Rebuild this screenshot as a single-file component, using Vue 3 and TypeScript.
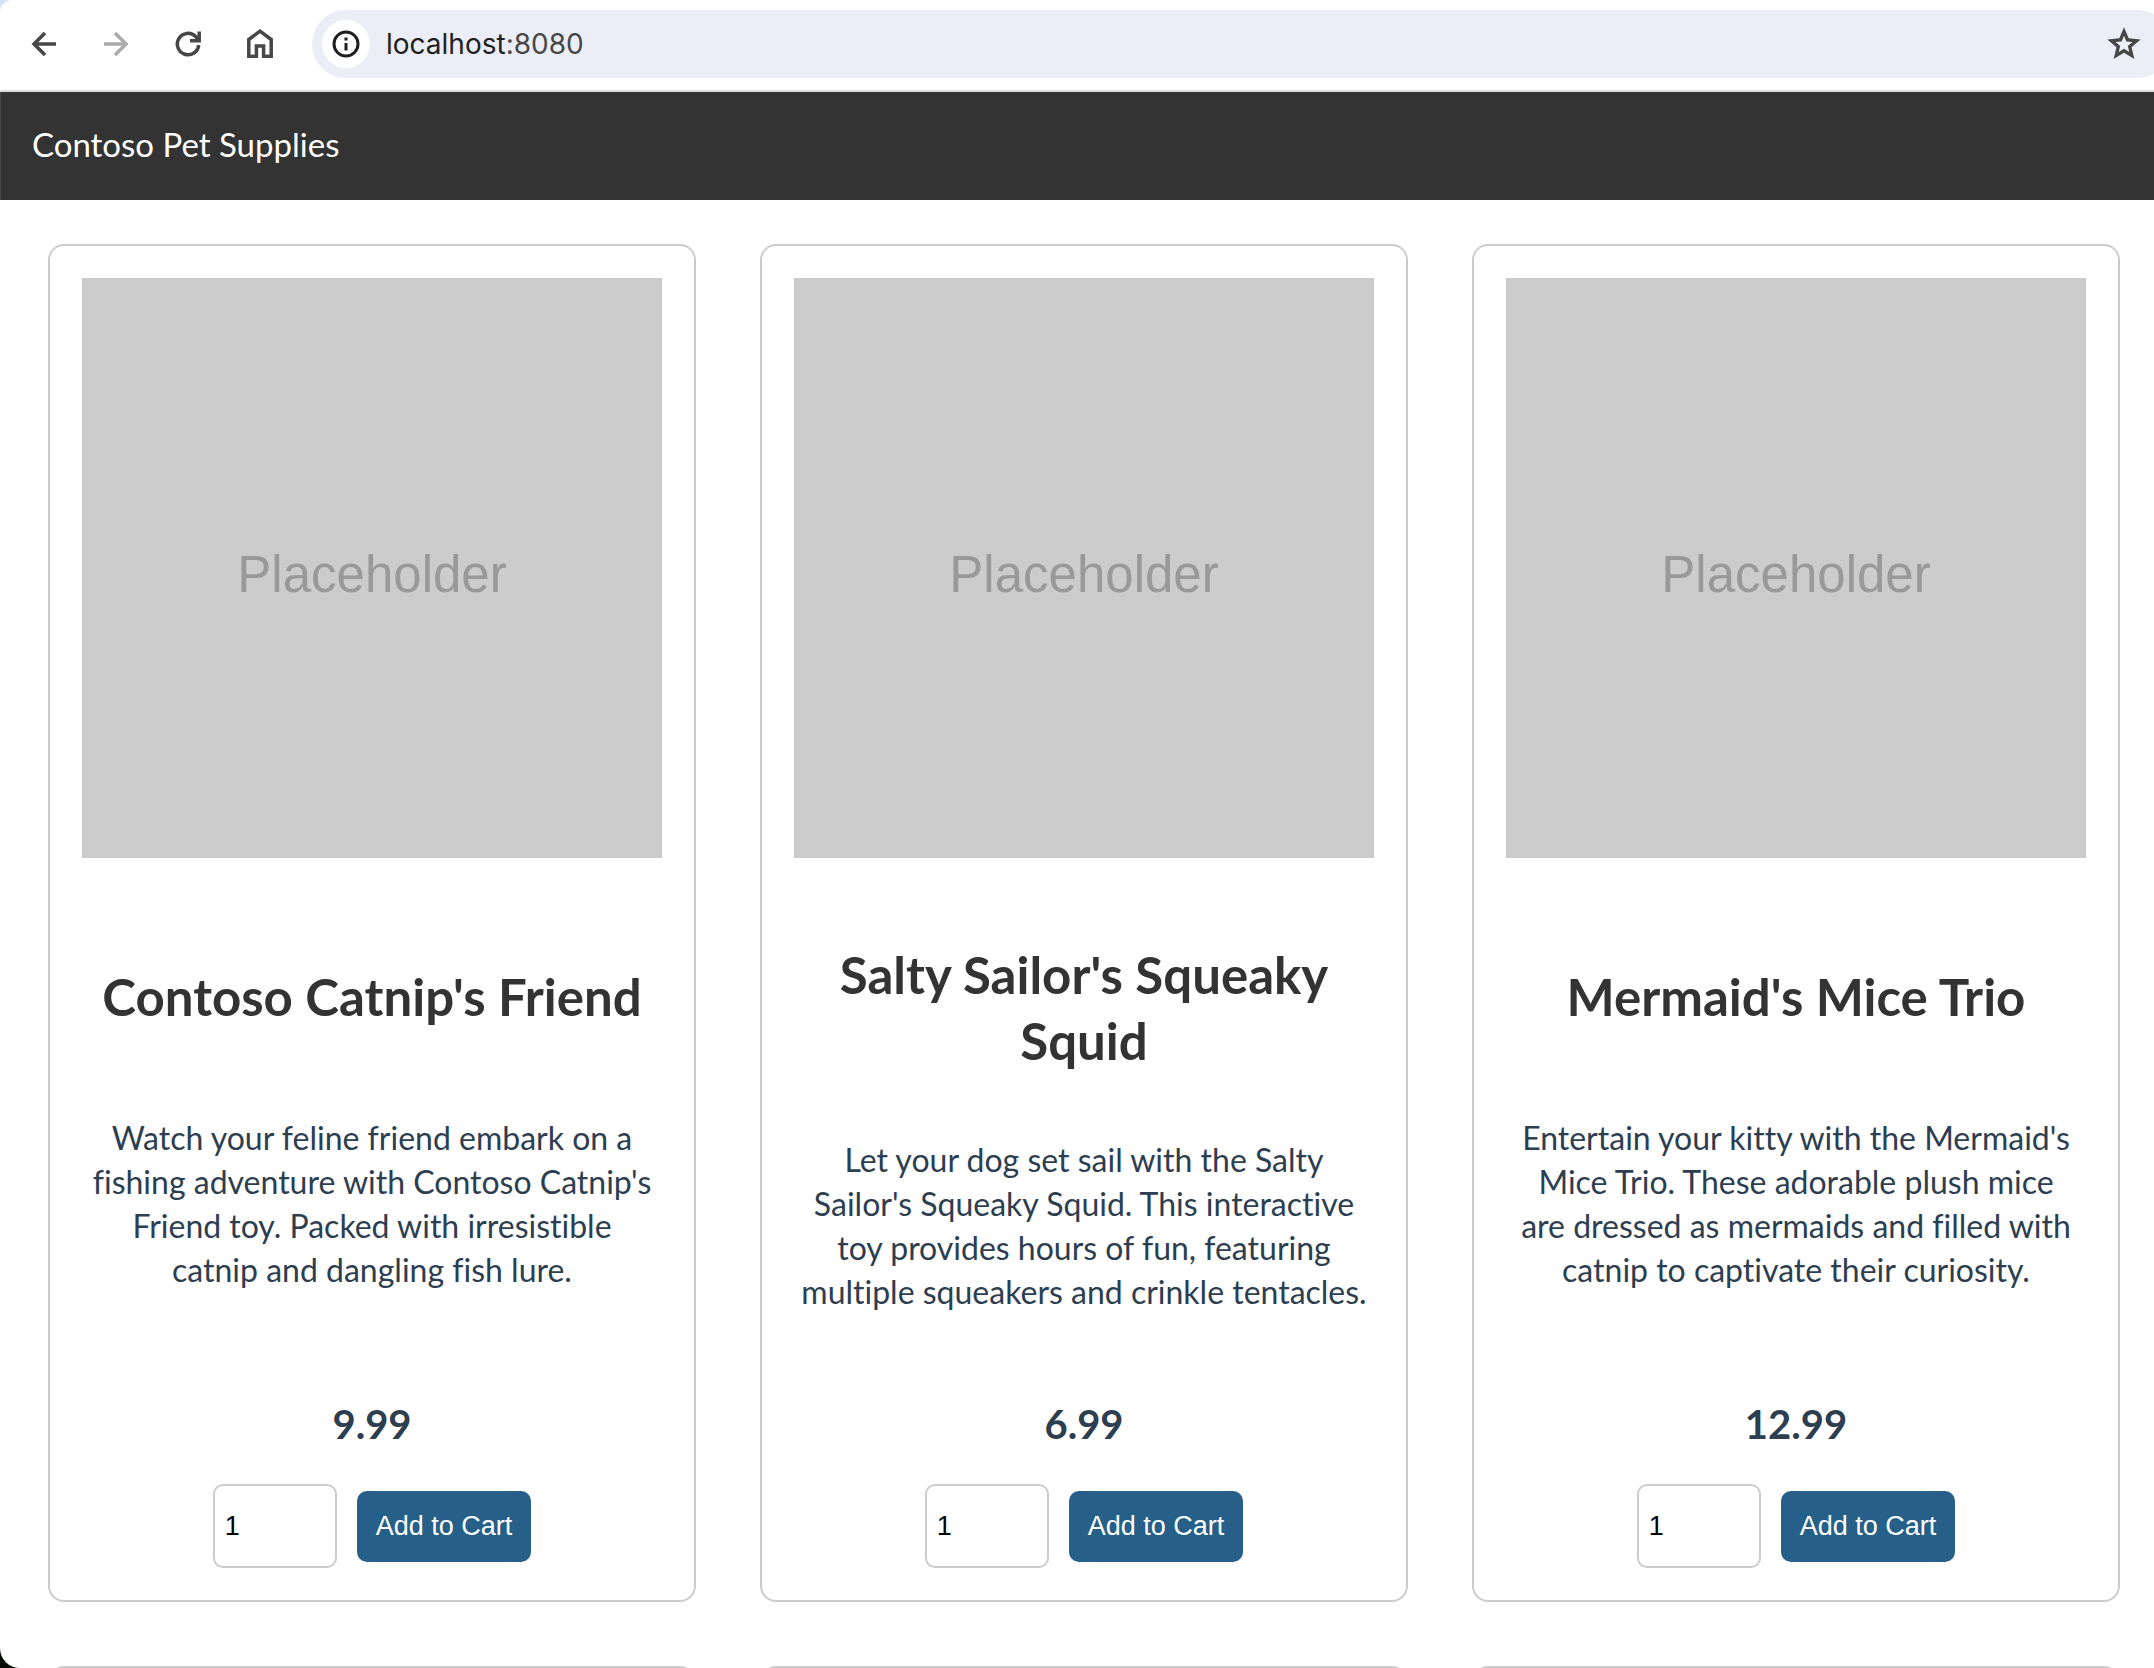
<script setup lang="ts">
import { ref } from 'vue'

interface Product {
  id: number
  name: string
  description: string[]
  price: string
  quantity: number
}

const url = { host: 'localhost', port: ':8080' }

const products = ref<Product[]>([
  {
    id: 1,
    name: "Contoso Catnip's Friend",
    description: [
      'Watch your feline friend embark on a',
      "fishing adventure with Contoso Catnip's",
      'Friend toy. Packed with irresistible',
      'catnip and dangling fish lure.',
    ],
    price: '9.99',
    quantity: 1,
  },
  {
    id: 2,
    name: "Salty Sailor's Squeaky Squid",
    description: [
      'Let your dog set sail with the Salty',
      "Sailor's Squeaky Squid. This interactive",
      'toy provides hours of fun, featuring',
      'multiple squeakers and crinkle tentacles.',
    ],
    price: '6.99',
    quantity: 1,
  },
  {
    id: 3,
    name: "Mermaid's Mice Trio",
    description: [
      "Entertain your kitty with the Mermaid's",
      'Mice Trio. These adorable plush mice',
      'are dressed as mermaids and filled with',
      'catnip to captivate their curiosity.',
    ],
    price: '12.99',
    quantity: 1,
  },
])
</script>

<template>
  <div class="desktop">
    <div class="window">
      <div class="toolbar">
        <button class="tool" type="button" aria-label="Back">
          <svg viewBox="0 0 32 32"><path d="M28 16H6.500M17 5L6 16l11 11" /></svg>
        </button>
        <button class="tool off" type="button" aria-label="Forward" disabled>
          <svg viewBox="0 0 32 32"><path d="M4 16h21.500M15 5l11 11-11 11" /></svg>
        </button>
        <button class="tool" type="button" aria-label="Reload">
          <svg viewBox="0 0 32 32">
            <path d="M26.700 17A10.700 10.700 0 1 1 23.600 8.500L26.500 11.400M27.200 3.500v9.200H18" />
          </svg>
        </button>
        <button class="tool" type="button" aria-label="Home">
          <svg viewBox="0 0 32 32"><path d="M4.800 11.500L16 3.200l11.200 8.300V28.300H19.600V18.100h-7.200V28.300H4.800z" /></svg>
        </button>
        <div class="address">
          <button class="info" type="button" aria-label="Site information">
            <svg viewBox="0 0 32 32">
              <circle cx="16" cy="16" r="12" />
              <path d="M16 15v7.500M16 9.500v3" />
            </svg>
          </button>
          <span class="url">{{ url.host }}<span class="port">{{ url.port }}</span></span>
          <button class="tool star" type="button" aria-label="Bookmark this page">
            <svg viewBox="0 0 24 24">
              <path
                fill-rule="evenodd"
                d="M12 2L14.810 8.620 22 9.240 16.550 13.970 18.180 21 12 17.270 5.820 21 7.450 13.970 2 9.240 9.190 8.620zM12 7.100L10.600 10.500 6.900 10.800 9.700 13.200 8.850 16.800 12 14.900 15.150 16.800 14.300 13.200 17.100 10.800 13.400 10.500z"
              />
            </svg>
          </button>
        </div>
      </div>

      <header class="banner">Contoso Pet Supplies</header>

      <main class="grid">
        <article v-for="product in products" :key="product.id" class="card">
          <div class="picture">Placeholder</div>
          <h2 class="name">{{ product.name }}</h2>
          <p class="description">{{ product.description.join('\n') }}</p>
          <div class="purchase">
            <h3 class="price">{{ product.price }}</h3>
            <div class="controls">
              <input v-model.number="product.quantity" class="quantity" type="number" min="1" :aria-label="`Quantity of ${product.name}`" />
              <button class="add" type="button">Add to Cart</button>
            </div>
          </div>
        </article>
        <article v-for="slot in 3" :key="`next-${slot}`" class="card"></article>
      </main>
    </div>
  </div>
</template>

<style>
body {
  margin: 0;
  overflow: hidden;
}
</style>

<style scoped>
.desktop {
  height: 100vh;
  overflow: hidden;
  background: linear-gradient(#d3e3fd 50%, #060d04 50%);
}

.window {
  display: flex;
  flex-direction: column;
  height: 100%;
  overflow: hidden;
  border-radius: 12px 0 0 20px;
  background: #fff;
  color: #2c3e50;
  font-family: Lato, 'Noto Sans', sans-serif;
  font-size: 32px;
  font-variant-ligatures: none;
  line-height: 44px;
}

.toolbar {
  display: flex;
  flex: none;
  align-items: center;
  gap: 40px;
  padding: 10px 0 12px 28px;
  border-bottom: 2px solid #dcdcdc;
}

button {
  border: 0;
  font: inherit;
}

.tool {
  flex: none;
  width: 32px;
  height: 32px;
  padding: 0;
  background: none;
  color: #474747;
}

.tool.off {
  color: #ababab;
}

svg {
  display: block;
  width: 100%;
  height: 100%;
  fill: none;
  stroke: currentColor;
  stroke-width: 3.500;
}

.address {
  display: flex;
  flex: 1;
  align-items: center;
  box-sizing: border-box;
  height: 68px;
  margin: 0 -18px 0 -4px;
  padding: 0 28px 0 10px;
  border-radius: 34px;
  background: #ebeef7;
}

.info {
  width: 48px;
  height: 48px;
  padding: 8px;
  border-radius: 50%;
  background: #fff;
  color: #1f1f1f;
}

.info svg {
  stroke-width: 3;
}

.url {
  flex: 1;
  margin-left: 16px;
  color: #1f1f1f;
  font-family: Inter, Roboto, sans-serif;
  font-size: 28px;
}

.port {
  color: #474747;
}

.tool.star {
  width: 40px;
  height: 40px;
}

.star svg {
  fill: currentColor;
  stroke: none;
}

.banner {
  flex: none;
  padding: 30px 32px 34px 31px;
  border-left: 1px solid #4a4a4a;
  background: #333;
  color: #fff;
  font-size: 33px;
}

.grid {
  display: grid;
  grid-template-columns: repeat(3, 1fr);
  gap: 64px;
  padding: 44px 34px 0 48px;
}

.card {
  display: flex;
  flex-direction: column;
  justify-content: space-between;
  min-width: 0;
  min-height: 80px;
  padding: 32px;
  border: 2px solid #ccc;
  border-radius: 16px;
  text-align: center;
}

.picture {
  display: flex;
  align-items: center;
  justify-content: center;
  box-sizing: border-box;
  aspect-ratio: 1;
  padding-top: 14px;
  background: #ccc;
  color: #999;
  font-family: 'Liberation Sans', Arial, sans-serif;
  font-size: 51px;
}

.name {
  margin: 84px 0 0;
  color: #333;
  font-size: 51px;
  line-height: 66px;
}

.description {
  margin: 64px 0 0;
  white-space: pre-line;
}

.purchase {
  margin-top: 84px;
}

.price {
  margin: 0;
  font-size: 40px;
  line-height: 52px;
}

.controls {
  display: flex;
  align-items: center;
  justify-content: center;
  gap: 20px;
  margin-top: 34px;
}

.quantity,
.add {
  border-radius: 10px;
  font-family: 'Liberation Sans', Arial, sans-serif;
  font-size: 27px;
}

.quantity {
  box-sizing: border-box;
  width: 124px;
  height: 84px;
  padding: 0 10px;
  border: 2px solid #ccc;
  background: #fff;
  color: #000;
  appearance: textfield;
}

.add {
  padding: 20px 19px;
  background: #265f87;
  color: #fff;
  line-height: 31px;
}
</style>
